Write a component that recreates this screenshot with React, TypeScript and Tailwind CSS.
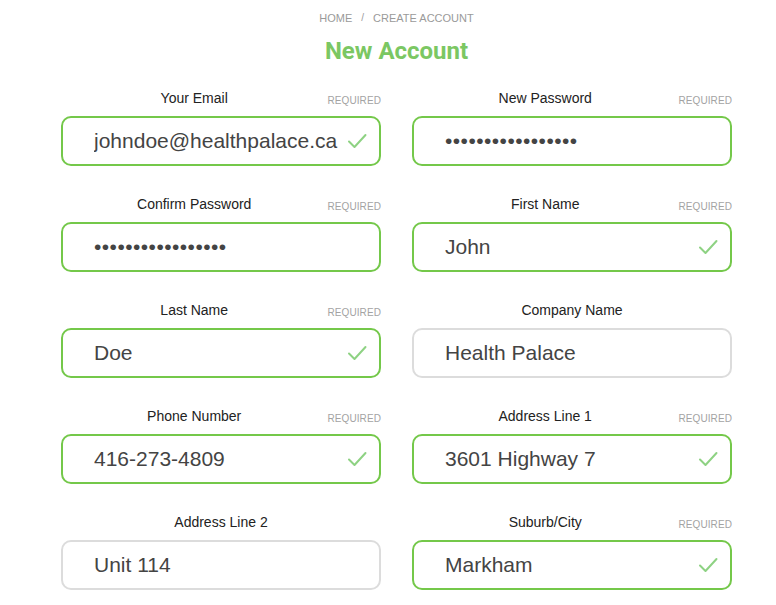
import React from "react";

type Field = {
  label: string;
  value: string;
  required?: boolean;
  valid?: boolean;
  password?: boolean;
};

const fields: Field[] = [
  { label: "Your Email", value: "johndoe@healthpalace.ca", required: true, valid: true },
  { label: "New Password", value: "passwordpassword1", required: true, password: true },
  { label: "Confirm Password", value: "passwordpassword1", required: true, password: true },
  { label: "First Name", value: "John", required: true, valid: true },
  { label: "Last Name", value: "Doe", required: true, valid: true },
  { label: "Company Name", value: "Health Palace" },
  { label: "Phone Number", value: "416-273-4809", required: true, valid: true },
  { label: "Address Line 1", value: "3601 Highway 7", required: true, valid: true },
  { label: "Address Line 2", value: "Unit 114" },
  { label: "Suburb/City", value: "Markham", required: true, valid: true },
];

const Check = () => (
  <svg
    width="20"
    height="16"
    viewBox="0 0 20 16"
    fill="none"
    className="absolute right-[14px] top-1/2 -translate-y-1/2"
  >
    <polyline
      points="2,8.5 7.5,14 18.5,2"
      stroke="#8ed283"
      strokeWidth="2"
      strokeLinecap="round"
      strokeLinejoin="round"
    />
  </svg>
);

const FormField = ({ f }: { f: Field }) => {
  const green = f.required;
  return (
    <div className="flex flex-col">
      <div className="flex items-end h-5 mb-2">
        <span className="flex-1 text-center text-[14px] leading-5 text-[#222]">{f.label}</span>
        {f.required && (
          <span className="text-[10px] leading-[15px] text-[#a3a3a3] tracking-[0.1px]">REQUIRED</span>
        )}
      </div>
      <div className="relative">
        <input
          readOnly
          type={f.password ? "password" : "text"}
          value={f.value}
          className={
            "w-full h-[50px] rounded-[10px] border-2 bg-white pl-[31px] pr-10 text-[21px] text-[#444] outline-none " +
            (green ? "border-[#74c84a]" : "border-[#dcdcdc]") +
            (f.password ? " tracking-[0.45px]" : "")
          }
          style={{ fontFamily: '"Liberation Sans", Arial, sans-serif' }}
        />
        {f.valid && <Check />}
      </div>
    </div>
  );
};

const App = () => {
  return (
    <div
      className="w-[776px] h-[605px] bg-white overflow-hidden"
      style={{ fontFamily: '"Liberation Sans", Arial, sans-serif' }}
    >
      <div className="ml-[61px] w-[671px]">
        {/* Breadcrumb */}
        <div className="pt-[10px] flex justify-center items-center gap-[9px] text-[11px] leading-4 text-[#9a9a9a]">
          <span>HOME</span>
          <span className="text-[10px]">/</span>
          <span>CREATE ACCOUNT</span>
        </div>

        {/* Title */}
        <h1
          className="mt-[9px] text-center text-[24px] leading-8 font-bold text-[#7bc763]"
          style={{ fontFamily: "Roboto, Arial, sans-serif" }}
        >
          New Account
        </h1>

        {/* Form grid */}
        <div className="mt-[21px] grid grid-cols-[320px_320px] gap-x-[31px] gap-y-7">
          {fields.map((f) => (
            <FormField key={f.label} f={f} />
          ))}
        </div>
      </div>
    </div>
  );
};

export default App;
